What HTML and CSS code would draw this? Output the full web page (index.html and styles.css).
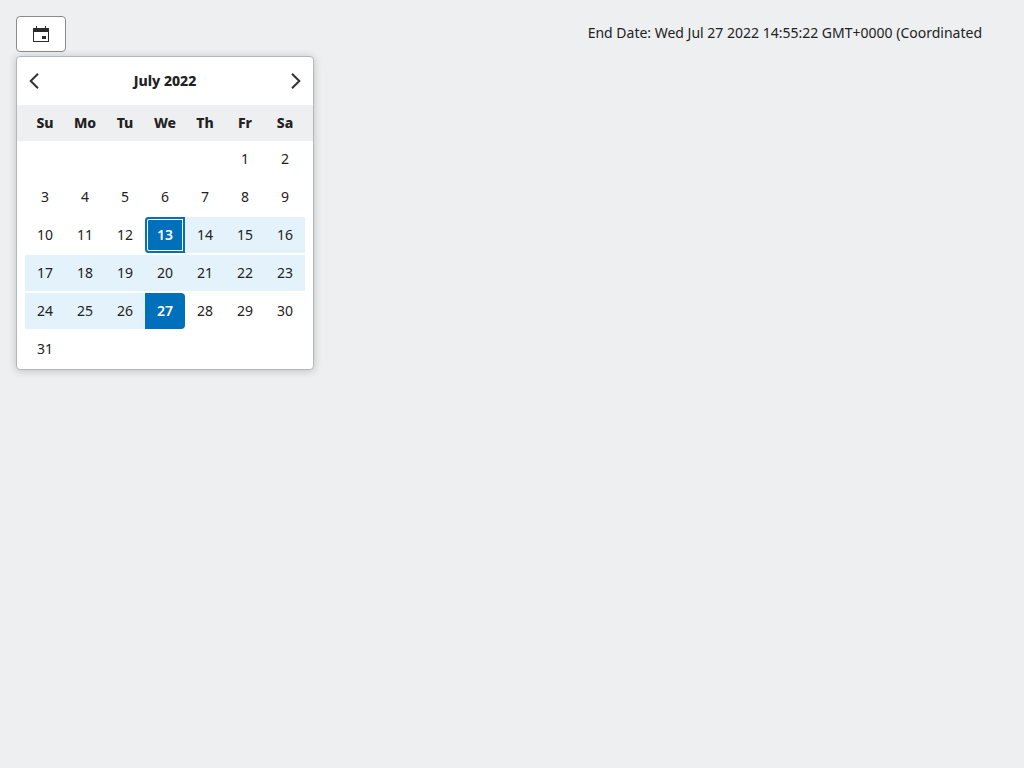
FILE: index.html
```html
<!DOCTYPE html>
<html lang="en">
<head>
<meta charset="utf-8">
<title>Date range</title>
<link rel="stylesheet" href="styles.css">
</head>
<body>
<main class="page">
  <section class="picker">
    <button class="trigger" aria-label="Open calendar">
      <svg width="16" height="16" viewBox="0 0 16 16"><path fill="#2b2b2b" fill-rule="evenodd" d="M3 0h1v2h8V0h1v2h2.500q.5 0 .5.500v13q0 .5-.5.500h-15q-.5 0-.5-.500v-13Q0 2 .5 2H3zM1 6v9h14V6zM9 10h4v3H9z"/></svg>
    </button>
    <div class="calendar">
      <header class="head">
        <svg class="arrow" width="10" height="16" viewBox="0 0 10 16"><path d="M9 .7L1.700 8 9 15.300"/></svg>
        <span>July 2022</span>
        <svg class="arrow" width="10" height="16" viewBox="0 0 10 16"><path d="M1 .7L8.300 8 1 15.300"/></svg>
      </header>
      <div class="weekdays"><span>Su</span><span>Mo</span><span>Tu</span><span>We</span><span>Th</span><span>Fr</span><span>Sa</span></div>
      <div class="days">
        <span class="first">1</span><span>2</span>
        <span>3</span><span>4</span><span>5</span><span>6</span><span>7</span><span>8</span><span>9</span>
        <span>10</span><span>11</span><span>12</span><span class="selected start">13</span><span class="range">14</span><span class="range">15</span><span class="range">16</span>
        <span class="range">17</span><span class="range">18</span><span class="range">19</span><span class="range">20</span><span class="range">21</span><span class="range">22</span><span class="range">23</span>
        <span class="range">24</span><span class="range">25</span><span class="range">26</span><span class="selected end">27</span><span>28</span><span>29</span><span>30</span>
        <span>31</span>
      </div>
    </div>
  </section>
  <p class="date">End Date: Wed Jul 27 2022 14:55:22 GMT+0000 (Coordinated</p>
</main>
</body>
</html>
```
FILE: styles.css
```css
* { box-sizing: border-box; }
body { margin: 0; background: #eeeff1; color: #222; font: 14px/20px "Noto Sans", sans-serif; }
.page { display: flex; justify-content: space-between; height: 768px; padding: 16px 42px 0 16px; overflow: hidden; }
.picker { width: 298px; }
.trigger { display: flex; align-items: center; justify-content: center; width: 50px; height: 36px; padding: 0; border: 1px solid #8c8c8c; border-radius: 4px; background: #fff; }
.calendar { margin-top: 4px; height: 314px; border: 1px solid #b0b8bd; border-radius: 4px; background: #fff; box-shadow: 0 1px 8px rgba(0,0,0,.2); }
.head { display: flex; align-items: center; justify-content: space-between; height: 48px; padding: 0 12px; font-weight: 800; }
.arrow { fill: none; stroke: #333; stroke-width: 2; }
.weekdays, .days { display: grid; grid-template-columns: repeat(7, 40px); padding: 0 8px; text-align: center; line-height: 36px; }
.weekdays { background: #eeeff1; font-weight: 800; }
.days { row-gap: 2px; }
.first { grid-column: 6; }
.range { background: #e4f2fc; }
.selected { background: #0070ba; color: #fff; font-weight: 600; }
.start { border-radius: 4px 0 0 4px; box-shadow: inset 0 0 0 2px #0070ba, inset 0 0 0 3px #fff; }
.end { border-radius: 0 4px 4px 0; }
.date { margin: 7px 0 0; white-space: nowrap; }
```
